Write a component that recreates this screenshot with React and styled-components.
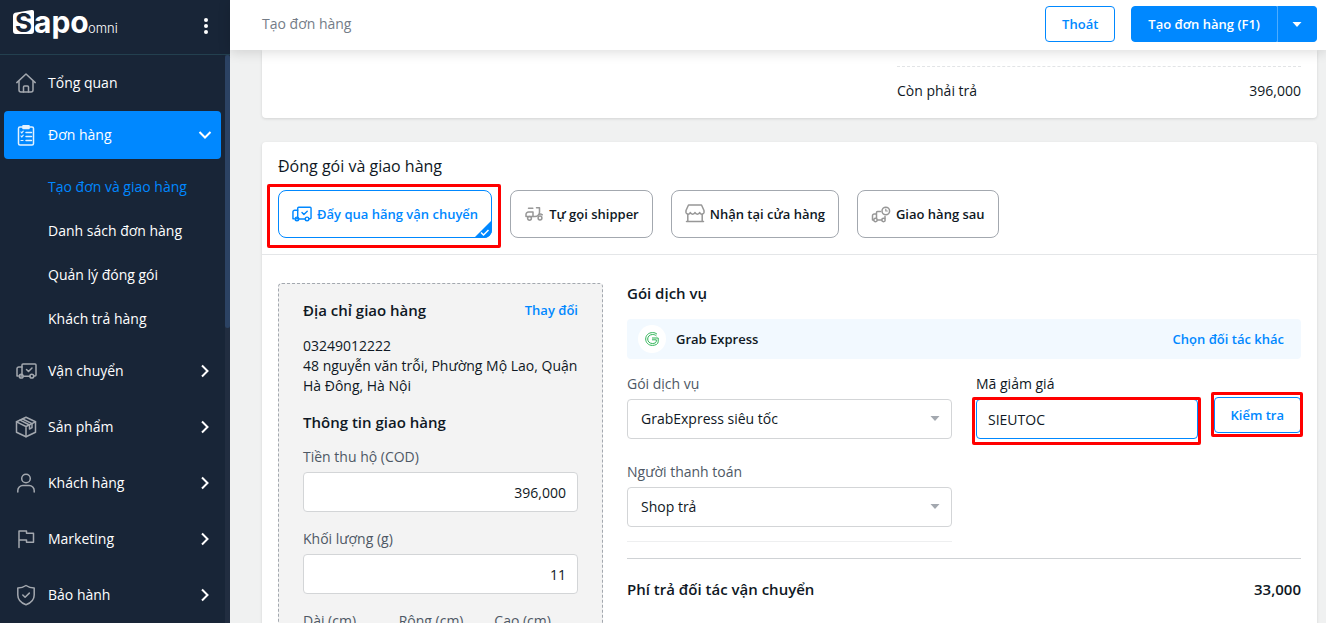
import React from "react";
import styled, { createGlobalStyle, css } from "styled-components";

const GlobalStyle = createGlobalStyle`
  :root {
    --mainBlue: #0088ff;
    --mainDark: #182537;
    --textColor: #0f1824;
    --mutedColor: #4e5865;
    --lineColor: #d3d5d7;
  }
  * {
    box-sizing: border-box;
  }
  body {
    margin: 0;
    background: #f0f1f1;
    color: var(--textColor);
    font-family: "Open Sans", "Noto Sans", sans-serif;
    font-size: 14px;
    line-height: 20px;
    overflow: hidden;
  }
  button, input, select {
    font: inherit;
    color: inherit;
  }
  a {
    text-decoration: none;
  }
`;

const Icon = ({ size = 20, width, children }) => (
  <svg
    width={width || size}
    height={size}
    viewBox={`0 0 ${width || size} ${size}`}
    fill="none"
    stroke="currentColor"
    strokeWidth="1.5"
    strokeLinecap="round"
    strokeLinejoin="round"
    aria-hidden="true"
  >
    {children}
  </svg>
);

const HomeIcon = () => (
  <Icon>
    <path d="M0.8 9.6L10 1l9.200 8.600" />
    <path d="M3 8.500v8.500a2 2 0 0 0 2 2h10a2 2 0 0 0 2-2V8.500" />
    <path d="M7.500 19v-5a1 1 0 0 1 1-1h3a1 1 0 0 1 1 1v5" />
  </Icon>
);

const OrderIcon = () => (
  <Icon size={22} width={20}>
    <rect x="2.500" y="3" width="15" height="18" rx="1.500" />
    <path d="M7 1.800h6v2.600H7z" fill="currentColor" />
    <path d="M10 8.500h5.500M10 12.500h5.500M10 16.500h5.500" />
    <path d="M5 8l.8 1 1.400-1.800M5 12l.8 1 1.400-1.800M5 16.500h2" strokeWidth="1.200" />
  </Icon>
);

const TruckIcon = () => (
  <Icon size={16} width={21}>
    <path d="M6 13H4.800M2.200 13H1V5.800a1.800 1.800 0 0 1 1.800-1.800H6" />
    <path d="M14 13.200H7.500M6 12V2a1 1 0 0 1 1-1h12a1 1 0 0 1 1 1v10a1 1 0 0 1-1 1h-1" />
    <circle cx="5.200" cy="13.200" r="1.900" />
    <circle cx="15.800" cy="13.200" r="1.900" />
    <path d="M10.500 6.500l2 2 3.500-3.500" />
  </Icon>
);

const BoxIcon = () => (
  <Icon size={22} width={22}>
    <path d="M11 1.200l9.500 4.600v10.400L11 20.800l-9.500-4.600V5.800z" />
    <path d="M1.500 5.800L11 10.500l9.500-4.700M11 10.500v10.300" />
    <path d="M5 4.200l9.500 4.800v4l2.500-1.300V7.600L7.600 3" />
  </Icon>
);

const UserIcon = () => (
  <Icon>
    <circle cx="10" cy="5.500" r="4.300" />
    <path d="M1.800 19v-1.500a5 5 0 0 1 5-5h6.400a5 5 0 0 1 5 5V19" />
  </Icon>
);

const FlagIcon = () => (
  <Icon>
    <path d="M3 18.500V2h7.500v2.300H17.500v9H10.500V11H3" />
  </Icon>
);

const ShieldIcon = () => (
  <Icon size={22} width={20}>
    <path d="M10 1.500c2.500 1.800 5.200 2.600 8.200 2.600v7c0 4.400-3 7.900-8.200 9.700-5.200-1.800-8.200-5.300-8.200-9.700v-7c3 0 5.700-.8 8.200-2.600z" />
    <path d="M6.800 11l2.300 2.300 4.200-4.200" />
  </Icon>
);

const ScooterIcon = () => (
  <Icon size={16} width={18}>
    <path d="M3.500 2.200h4.300" />
    <path d="M3.500 6h4.500v4.500H1V8.500A2.500 2.500 0 0 1 3.500 6z" />
    <path d="M11.500 1.800h3v4.200c0 2.500-2 4.500-4.500 4.500H8M13.500 8.500c1.300-.7 2.700-.6 3.800.3" />
    <circle cx="4.500" cy="12.300" r="1.900" />
    <circle cx="15" cy="12" r="1.900" />
  </Icon>
);

const StoreIcon = () => (
  <Icon size={20} width={20}>
    <path d="M3.500 1h13l2.500 5.500v1a2.200 2.200 0 0 1-4.300 1 2.500 2.500 0 0 1-4.700 0 2.500 2.500 0 0 1-4.700 0 2.200 2.200 0 0 1-4.300-1v-1z" />
    <path d="M2.800 10v7.500M17.200 10v7.500M1.500 17.500h17" />
  </Icon>
);

const LaterIcon = () => (
  <Icon size={17} width={20}>
    <path d="M2.500 14H1.500V9.800A1.800 1.800 0 0 1 3.300 8H5.500M9.500 5.500H6.500a1 1 0 0 0-1 1v5.500M10.800 14H6.500M14 10.500v2" />
    <circle cx="4.500" cy="14" r="1.700" />
    <circle cx="12.500" cy="14" r="1.700" />
    <circle cx="14.800" cy="5" r="3.800" />
    <path d="M14.800 3.200V5h1.500" strokeWidth="1.200" />
  </Icon>
);

const Chevron = styled.svg.attrs({ viewBox: "0 0 8 14", width: 8, height: 14, "aria-hidden": true })`
  margin-left: auto;
  fill: none;
  stroke: #fff;
  stroke-width: 2;
  transform: rotate(${(p) => (p.$open ? 90 : 0)}deg);
`;

const Caret = ({ className }) => (
  <svg className={className} width="10" height="5" viewBox="0 0 10 5" aria-hidden="true">
    <path d="M0.500 0h9L5 5z" fill="currentColor" />
  </svg>
);

const Logo = () => (
  <LogoSvg width="110" height="34" viewBox="0 0 110 34" role="img" aria-label="Sapo omni">
    <path d="M4.500 3.500L19.500 1a2 2 0 0 1 2.500 2V22a3 3 0 0 1-3 3H4A3 3 0 0 1 1 22V7a3.500 3.500 0 0 1 3.500-3.500z" fill="#fff" />
    <LogoText x="3" y="23" fill="#182537" fontSize="26">S</LogoText>
    <LogoText x="22" y="24" fill="#fff" fontSize="30">apo</LogoText>
    <LogoSub x="76" y="24" fill="#fff" fontSize="13">omni</LogoSub>
  </LogoSvg>
);

export default function App() {
  return (
    <>
      <GlobalStyle />
      <Layout>
        <Sidebar />
        <Main>
          <Topbar>
            <PageTitle>Tạo đơn hàng</PageTitle>
            <Button>Thoát</Button>
            <SplitButton>
              <Button $primary>Tạo đơn hàng (F1)</Button>
              <Button $primary $narrow aria-label="Thêm">
                <Caret />
              </Button>
            </SplitButton>
          </Topbar>
          <Content>
            <SummaryCard>
              <SummaryRow>
                <span>Còn phải trả</span>
                <span>396,000</span>
              </SummaryRow>
            </SummaryCard>
            <Card>
              <CardHeader>
                <CardTitle>Đóng gói và giao hàng</CardTitle>
                <Modes />
              </CardHeader>
              <CardBody>
                <Address />
                <Service />
              </CardBody>
            </Card>
          </Content>
        </Main>
      </Layout>
    </>
  );
}

const subItems = ["Tạo đơn và giao hàng", "Danh sách đơn hàng", "Quản lý đóng gói", "Khách trả hàng"];

const menuItems = [
  { label: "Vận chuyển", icon: <TruckIcon /> },
  { label: "Sản phẩm", icon: <BoxIcon /> },
  { label: "Khách hàng", icon: <UserIcon /> },
  { label: "Marketing", icon: <FlagIcon /> },
  { label: "Bảo hành", icon: <ShieldIcon /> },
];

function Sidebar() {
  return (
    <SideWrapper>
      <Brand>
        <Logo />
        <MoreButton aria-label="Menu">
          <svg width="4" height="16" viewBox="0 0 4 16" fill="#fff">
            <circle cx="2" cy="2" r="2" />
            <circle cx="2" cy="8" r="2" />
            <circle cx="2" cy="14" r="2" />
          </svg>
        </MoreButton>
      </Brand>
      <SideScroll>
        <Menu>
          <MenuGroup $gap={4}>
            <MenuLink href="#">
              <MenuIcon><HomeIcon /></MenuIcon>
              Tổng quan
            </MenuLink>
          </MenuGroup>
          <MenuGroup $gap={6}>
            <MenuLink href="#" $active>
              <MenuIcon $active><OrderIcon /></MenuIcon>
              Đơn hàng
              <Chevron $open><path d="M1 1.500L6.500 7 1 12.500" /></Chevron>
            </MenuLink>
            <SubMenu>
              {subItems.map((item, i) => (
                <li key={item}>
                  <SubLink href="#" $active={i === 0}>{item}</SubLink>
                </li>
              ))}
            </SubMenu>
          </MenuGroup>
          {menuItems.map((item) => (
            <MenuGroup key={item.label} $gap={8}>
              <MenuLink href="#">
                <MenuIcon>{item.icon}</MenuIcon>
                {item.label}
                <Chevron><path d="M1 1.500L6.500 7 1 12.500" /></Chevron>
              </MenuLink>
            </MenuGroup>
          ))}
        </Menu>
        <ScrollTrack>
          <ScrollThumb />
        </ScrollTrack>
      </SideScroll>
    </SideWrapper>
  );
}

function Modes() {
  return (
    <ModeList>
      <Marked $t={6} $l={11} $r={9} $b={10}>
        <ModeButton $active>
          <TruckIcon />
          Đẩy qua hãng vận chuyển
          <Corner width="18" height="18" viewBox="0 0 18 18" aria-hidden="true">
            <path d="M18 0v10a8 8 0 0 1-8 8H0z" fill="#0088ff" />
            <path d="M7 12.500l2.500 2.500 5-5" fill="none" stroke="#fff" strokeWidth="1.500" />
          </Corner>
        </ModeButton>
      </Marked>
      <ModeButton><ScooterIcon />Tự gọi shipper</ModeButton>
      <ModeButton><StoreIcon />Nhận tại cửa hàng</ModeButton>
      <ModeButton><LaterIcon />Giao hàng sau</ModeButton>
    </ModeList>
  );
}

function Address() {
  return (
    <AddressBox>
      <BoxHead>
        <Heading>Địa chỉ giao hàng</Heading>
        <TextLink href="#">Thay đổi</TextLink>
      </BoxHead>
      <AddressText>
        03249012222
        <br />
        48 nguyễn văn trỗi, Phường Mộ Lao, Quận Hà Đông, Hà Nội
      </AddressText>
      <Heading>Thông tin giao hàng</Heading>
      <Fields>
        <Field>
          <Label htmlFor="cod">Tiền thu hộ (COD)</Label>
          <Input id="cod" $right defaultValue="396,000" />
        </Field>
        <Field>
          <Label htmlFor="weight">Khối lượng (g)</Label>
          <Input id="weight" $right defaultValue="11" />
        </Field>
        <SizeRow>
          <Field>
            <Label htmlFor="length">Dài (cm)</Label>
            <Input id="length" $right />
          </Field>
          <Field>
            <Label htmlFor="width">Rộng (cm)</Label>
            <Input id="width" $right />
          </Field>
          <Field>
            <Label htmlFor="height">Cao (cm)</Label>
            <Input id="height" $right />
          </Field>
        </SizeRow>
      </Fields>
    </AddressBox>
  );
}

function Service() {
  return (
    <ServiceBox>
      <Heading>Gói dịch vụ</Heading>
      <Partner>
        <PartnerLogo>
          <svg width="14" height="14" viewBox="0 0 14 14" fill="none" stroke="#2fb457" aria-hidden="true">
            <path d="M12 2.200C10.800 1.100 9.500.6 7.600.6 3.500.6.700 3.300.7 7s2.800 6.400 6.700 6.400c3 0 5.800-1.300 5.800-3.700V6H7" />
            <path d="M11.500 4C10.500 3 9.300 2.500 7.700 2.500 4.800 2.500 2.700 4.400 2.700 7s2 4.500 4.700 4.500c2.200 0 3.900-.8 3.900-2.300V7.800H7" />
          </svg>
        </PartnerLogo>
        Grab Express
        <TextLink href="#">Chọn đối tác khác</TextLink>
      </Partner>
      <ServiceGrid>
        <ServiceColumn>
          <Field>
            <Label htmlFor="package">Gói dịch vụ</Label>
            <SelectWrapper>
              <Select id="package" defaultValue="fast">
                <option value="fast">GrabExpress siêu tốc</option>
              </Select>
              <SelectCaret />
            </SelectWrapper>
          </Field>
          <Field>
            <Label htmlFor="payer">Người thanh toán</Label>
            <SelectWrapper>
              <Select id="payer" defaultValue="shop">
                <option value="shop">Shop trả</option>
              </Select>
              <SelectCaret />
            </SelectWrapper>
          </Field>
        </ServiceColumn>
        <Field>
          <Label htmlFor="coupon" $dark>Mã giảm giá</Label>
          <CouponRow>
            <Marked $grow $t={2} $l={4} $r={3} $b={6}>
              <Input id="coupon" $focused defaultValue="SIEUTOC" />
            </Marked>
            <Marked $raised $t={5} $l={3} $r={2} $b={4}>
              <Button>Kiểm tra</Button>
            </Marked>
          </CouponRow>
        </Field>
      </ServiceGrid>
      <Total>
        <span>Phí trả đối tác vận chuyển</span>
        <span>33,000</span>
      </Total>
    </ServiceBox>
  );
}

const LogoSvg = styled.svg`
  overflow: visible;
`;

const LogoText = styled.text`
  font-family: Inter, sans-serif;
  font-weight: 700;
`;

const LogoSub = styled.text`
  font-family: Inter, sans-serif;
  font-weight: 300;
`;

const Layout = styled.div`
  display: flex;
  height: 100vh;
`;

const SideWrapper = styled.aside`
  display: flex;
  flex-direction: column;
  flex: 0 0 230px;
  background: var(--mainDark);
  color: #fff;
`;

const Brand = styled.div`
  display: flex;
  align-items: center;
  justify-content: space-between;
  flex: none;
  height: 55px;
  padding: 0 16px 3px 12px;
  border-bottom: 1px solid #23404f;
`;

const MoreButton = styled.button`
  display: flex;
  padding: 6px;
  border: 0;
  background: none;
  cursor: pointer;
`;

const SideScroll = styled.nav`
  display: flex;
  flex: 1;
  min-height: 0;
`;

const Menu = styled.ul`
  flex: 1;
  margin: 0;
  padding: 4px 4px 0;
  overflow: hidden;
  list-style: none;
`;

const MenuGroup = styled.li`
  margin-bottom: ${(p) => p.$gap}px;
`;

const MenuLink = styled.a`
  display: flex;
  align-items: center;
  height: 48px;
  padding: 0 12px 0 11px;
  border-radius: 4px;
  background: ${(p) => (p.$active ? "var(--mainBlue)" : "none")};
  color: #fff;
`;

const MenuIcon = styled.span`
  display: flex;
  justify-content: center;
  flex: 0 0 22px;
  margin-right: 11px;
  color: ${(p) => (p.$active ? "#e3f2ff" : "#a3a8af")};
`;

const SubMenu = styled.ul`
  margin: 0;
  padding: 6px 0 0;
  list-style: none;
`;

const SubLink = styled.a`
  display: block;
  padding: 12px 0 12px 44px;
  color: ${(p) => (p.$active ? "var(--mainBlue)" : "#fff")};
`;

const ScrollTrack = styled.div`
  flex: 0 0 5px;
  background: #212d40;
`;

const ScrollThumb = styled.div`
  height: 48%;
  border-radius: 3px;
  background: #2b4263;
`;

const Main = styled.main`
  display: flex;
  flex-direction: column;
  flex: 1;
  min-width: 0;
`;

const Topbar = styled.header`
  display: flex;
  align-items: center;
  flex: none;
  gap: 16px;
  height: 50px;
  padding: 0 9px 2px 32px;
  background: #fff;
  box-shadow: 0 2px 12px rgba(0, 0, 0, 0.14);
  z-index: 1;
`;

const PageTitle = styled.span`
  margin-right: auto;
  color: #747c87;
`;

const Button = styled.button`
  display: flex;
  align-items: center;
  justify-content: center;
  height: 36px;
  padding: 0 ${(p) => (p.$narrow ? 14 : 16)}px;
  border: 1px solid var(--mainBlue);
  border-radius: 4px;
  background: ${(p) => (p.$primary ? "var(--mainBlue)" : "#fff")};
  color: ${(p) => (p.$primary ? "#fff" : "var(--mainBlue)")};
  font-size: 13px;
  font-weight: 600;
  cursor: pointer;
`;

const SplitButton = styled.div`
  display: flex;

  ${Button}:first-child {
    border-radius: 4px 0 0 4px;
  }
  ${Button}:last-child {
    border-left-color: #4dacff;
    border-radius: 0 4px 4px 0;
  }
`;

const Content = styled.div`
  flex: 1;
  min-height: 0;
  padding: 0 9px 0 32px;
  overflow: hidden;
`;

const Card = styled.section`
  background: #fff;
  border-radius: 4px;
  box-shadow: 0 1px 3px rgba(0, 0, 0, 0.12);
`;

const SummaryCard = styled(Card)`
  display: flex;
  justify-content: flex-end;
  margin-bottom: 24px;
  padding: 16px 16px 3px;
  border-radius: 0 0 4px 4px;
`;

const SummaryRow = styled.div`
  display: flex;
  justify-content: space-between;
  flex: 0 1 404px;
  padding: 14px 0;
  border-top: 1px dashed #e2e4e6;
`;

const CardHeader = styled.div`
  padding: 12px 16px 16px;
  border-bottom: 1px solid #e4e6e8;
`;

const CardTitle = styled.h2`
  margin: 0 0 12px;
  font-size: 16px;
  font-weight: 400;
  line-height: 24px;
`;

const ModeList = styled.div`
  display: flex;
  gap: 18px;
`;

/* red frame drawn around a control */
const Marked = styled.div`
  position: relative;
  display: grid;
  flex: ${(p) => (p.$grow ? "1" : "none")};
  min-width: 0;
  margin-top: ${(p) => (p.$raised ? -2 : 0)}px;

  &::after {
    content: "";
    position: absolute;
    top: -${(p) => p.$t}px;
    right: -${(p) => p.$r}px;
    bottom: -${(p) => p.$b}px;
    left: -${(p) => p.$l}px;
    border: 3px solid #ff0000;
    border-radius: 2px;
    pointer-events: none;
  }
`;

const ModeButton = styled.button`
  position: relative;
  display: flex;
  align-items: center;
  gap: 5px;
  height: 48px;
  padding: 0 13px;
  border: 1px solid #a3a8af;
  border-radius: 8px;
  background: #fff;
  font-size: 13px;
  font-weight: 600;
  white-space: nowrap;
  cursor: pointer;

  > svg:first-child {
    flex: 0 0 20px;
    color: #979797;
  }

  ${(p) =>
    p.$active &&
    css`
      border-color: var(--mainBlue);
      color: var(--mainBlue);

      > svg:first-child {
        color: var(--mainBlue);
      }
    `}
`;

const Corner = styled.svg`
  position: absolute;
  right: -1px;
  bottom: -1px;
`;

const CardBody = styled.div`
  display: grid;
  grid-template-columns: repeat(3, 1fr);
  gap: 24px;
  padding: 28px 16px;
`;

const AddressBox = styled.div`
  padding: 16px 24px;
  border: 1px dashed #a3a8af;
  border-radius: 4px;
  background: #f3f3f3;
`;

const BoxHead = styled.div`
  display: flex;
  align-items: center;
  justify-content: space-between;
  margin-bottom: 16px;
`;

const Heading = styled.h3`
  margin: 0;
  font-size: 15px;
  font-weight: 600;
  line-height: 20px;
`;

const TextLink = styled.a`
  color: var(--mainBlue);
  font-size: 13px;
  font-weight: 600;
`;

const AddressText = styled.p`
  margin: 0 0 16px;
`;

const Fields = styled.div`
  display: grid;
  gap: 17px;
  padding-top: 15px;
`;

const Field = styled.div`
  display: flex;
  flex-direction: column;
  gap: 5px;
  min-width: 0;
`;

const Label = styled.label`
  color: ${(p) => (p.$dark ? "var(--textColor)" : "var(--mutedColor)")};
`;

const Input = styled.input`
  width: 100%;
  height: 40px;
  padding: 0 11px;
  border: 1px solid ${(p) => (p.$focused ? "var(--mainBlue)" : "var(--lineColor)")};
  border-radius: 4px;
  background: #fff;
  text-align: ${(p) => (p.$right ? "right" : "left")};
  outline: none;
`;

const SizeRow = styled.div`
  display: grid;
  grid-template-columns: repeat(3, 1fr);
  gap: 12px;
`;

const ServiceBox = styled.div`
  grid-column: span 2;
`;

const Partner = styled.div`
  display: flex;
  align-items: center;
  height: 40px;
  margin: 16px 0 15px;
  padding: 0 17px 0 11px;
  border-radius: 4px;
  background: #f2f9ff;
  font-size: 13px;
  font-weight: 600;

  ${TextLink} {
    margin-left: auto;
  }
`;

const PartnerLogo = styled.span`
  display: flex;
  align-items: center;
  justify-content: center;
  width: 28px;
  height: 28px;
  margin-right: 10px;
  border-radius: 50%;
  background: #fff;
`;

const ServiceGrid = styled.div`
  display: grid;
  grid-template-columns: repeat(2, 1fr);
  gap: 24px;
  align-items: start;
`;

const ServiceColumn = styled.div`
  display: grid;
  gap: 23px;
  padding-bottom: 14px;
  border-bottom: 1px solid #eeeff0;
`;

const SelectWrapper = styled.div`
  position: relative;
`;

const Select = styled.select`
  width: 100%;
  height: 40px;
  padding: 0 32px 0 13px;
  border: 1px solid var(--lineColor);
  border-radius: 4px;
  background: #fff;
  appearance: none;
`;

const SelectCaret = styled(Caret)`
  position: absolute;
  top: 17px;
  right: 12px;
  color: #a3a8af;
  pointer-events: none;
`;

const CouponRow = styled.div`
  display: flex;
  align-items: flex-start;
  gap: 16px;
`;

const Total = styled.div`
  display: flex;
  justify-content: space-between;
  margin-top: 16px;
  padding-top: 20px;
  border-top: 1px solid #cfd2d5;
  font-size: 15px;
  font-weight: 600;
`;
